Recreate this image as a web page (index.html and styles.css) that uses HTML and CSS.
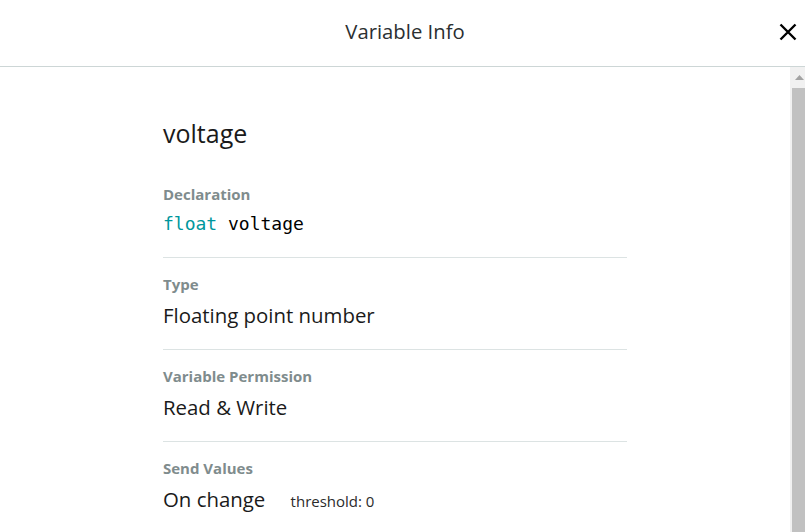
FILE: index.html
```html
<!DOCTYPE html>
<html lang="en">
<head>
<meta charset="utf-8">
<title>Variable Info</title>
<link rel="stylesheet" href="styles.css">
</head>
<body>
<div class="modal">
  <header class="modal-header">
    <h1 class="modal-title">Variable Info</h1>
    <button class="close-btn" aria-label="Close">
      <svg width="18" height="18" viewBox="0 0 18 18"><path d="M1.5 1.5 L16.5 16.5 M16.5 1.5 L1.5 16.5" stroke="#000" stroke-width="2.4" fill="none"/></svg>
    </button>
  </header>
  <div class="modal-main">
    <main class="modal-body">
      <div class="content">
        <h2 class="var-name">voltage</h2>
        <section class="field first">
          <div class="label">Declaration</div>
          <div class="code"><span class="kw">float</span> voltage</div>
        </section>
        <section class="field">
          <div class="label">Type</div>
          <div class="value">Floating point number</div>
        </section>
        <section class="field">
          <div class="label">Variable Permission</div>
          <div class="value">Read &amp; Write</div>
        </section>
        <section class="field last">
          <div class="label">Send Values</div>
          <div class="value">On change <span class="threshold">threshold: 0</span></div>
        </section>
      </div>
    </main>
    <div class="scrollbar" aria-hidden="true">
      <div class="sb-button">
        <svg width="9" height="5" viewBox="0 0 9 5"><path d="M0 5 L4.5 0 L9 5 Z" fill="#a3a3a3"/></svg>
      </div>
      <div class="sb-thumb"></div>
    </div>
  </div>
</div>
</body>
</html>
```
FILE: styles.css
```css
html, body {
  margin: 0;
  padding: 0;
  height: 100%;
  overflow: hidden;
  background: #fff;
}
body {
  font-family: "Open Sans", "Noto Sans", sans-serif;
  color: #1f1f1f;
}
.modal {
  display: flex;
  flex-direction: column;
  width: 807px;
  height: 620px;
}
.modal-header {
  flex: 0 0 auto;
  height: 66px;
  border-bottom: 1px solid #cdd6d6;
  display: flex;
  align-items: center;
  justify-content: center;
  position: relative;
  padding-right: 2px;
}
.modal-title {
  margin: 0 0 4px;
  font-size: 20.3px;
  font-weight: 400;
  color: #2b2f31;
  padding-left: 5px;
}
.close-btn {
  position: absolute;
  right: 10px;
  top: 23px;
  width: 18px;
  height: 18px;
  padding: 0;
  border: 0;
  background: none;
  display: block;
}
.close-btn svg { display: block; }
.modal-main {
  flex: 1 1 auto;
  min-height: 0;
  display: flex;
}
.modal-body {
  flex: 1 1 auto;
  overflow: hidden;
}
.scrollbar {
  flex: 0 0 17px;
  background: #f1f1f1;
  display: flex;
  flex-direction: column;
}
.sb-button {
  height: 21px;
  display: flex;
  align-items: center;
  justify-content: center;
  padding-left: 1px;
}
.sb-button svg { display: block; }
.sb-thumb {
  flex: 1 1 auto;
  margin: 0 2px 40px;
  background: #c1c1c1;
}
.content {
  width: 464px;
  margin: 0 auto;
  padding: 50px 0 103px;
}
.var-name {
  margin: 0 0 18px;
  font-size: 25px;
  line-height: 32px;
  font-weight: 400;
  color: #1a1a1a;
}
.field {
  padding: 16px 0 20px;
  border-bottom: 1px solid #dce3e3;
}
.field.first { padding: 17px 0 19px; }
.field.last { border-bottom: 0; }
.label {
  font-size: 15px;
  line-height: 20px;
  font-weight: 700;
  color: #7f8c8d;
  margin-bottom: 7px;
}
.value {
  font-size: 20.4px;
  line-height: 28px;
  color: #1a1a1a;
}
.code {
  font-family: "DejaVu Sans Mono", "Liberation Mono", monospace;
  font-size: 18px;
  line-height: 28px;
  color: #000;
  margin-top: -1px;
}
.kw { color: #00979d; }
.threshold {
  font-size: 15px;
  color: #2b2b2b;
  margin-left: 20px;
}
```
